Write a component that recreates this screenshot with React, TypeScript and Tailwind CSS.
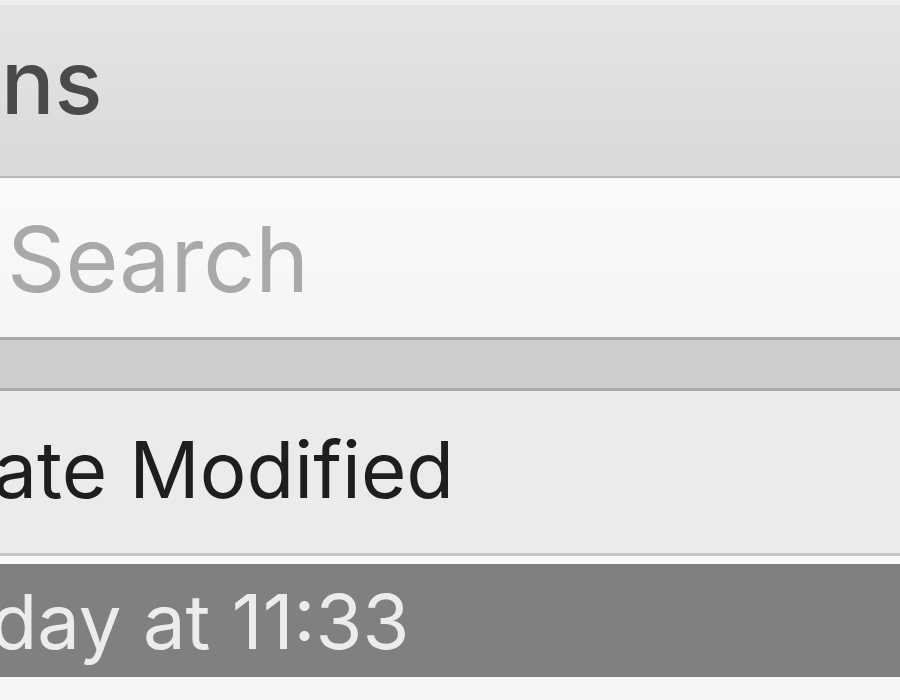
export default function App() {
  return (
    <div
      className="flex h-[700px] w-[900px] flex-col overflow-hidden bg-[#f6f6f6]"
      style={{ fontFamily: "Inter, 'Liberation Sans', sans-serif" }}
    >
      {/* window top edge */}
      <div className="h-[5px] bg-[#eeeeee]" />

      {/* title bar */}
      <div className="h-[173px] border-b-2 border-[#b7b7b7] bg-gradient-to-b from-[#e5e5e5] to-[#d9d9d9] pt-[32px]">
        <span className="ml-[1px] block whitespace-nowrap text-[89px] font-medium leading-none text-[#4a4a4a]">
          ns
        </span>
      </div>

      {/* search field */}
      <div className="h-[162px] border-b-[3px] border-[#a9a9a9] bg-gradient-to-b from-[#fafafa] to-[#f5f5f5] pt-[36px]">
        <span className="ml-[7px] block whitespace-nowrap text-[91px] leading-none text-[#a9a9a9]">
          Search
        </span>
      </div>

      {/* gray band */}
      <div className="h-[51px] border-b-[3px] border-[#a9a9a9] bg-[#cdcdcd]" />

      {/* column header */}
      <div className="h-[165px] border-b-[3px] border-[#c6c6c6] bg-[#ebebeb] pt-[40px]">
        <span className="ml-[-63px] block whitespace-nowrap text-[78px] leading-none text-[#1e1e1e]">
          Date Modified
        </span>
      </div>

      <div className="h-[8px] bg-[#f9f9f9]" />

      {/* selected row */}
      <div className="h-[113px] bg-[#808080] pt-[19px]">
        <span className="ml-[-98px] block whitespace-nowrap text-[76px] leading-none text-[#ececec]">
          Today at 11:33
        </span>
      </div>

      <div className="flex-1 bg-[#f6f6f6]" />
    </div>
  )
}
